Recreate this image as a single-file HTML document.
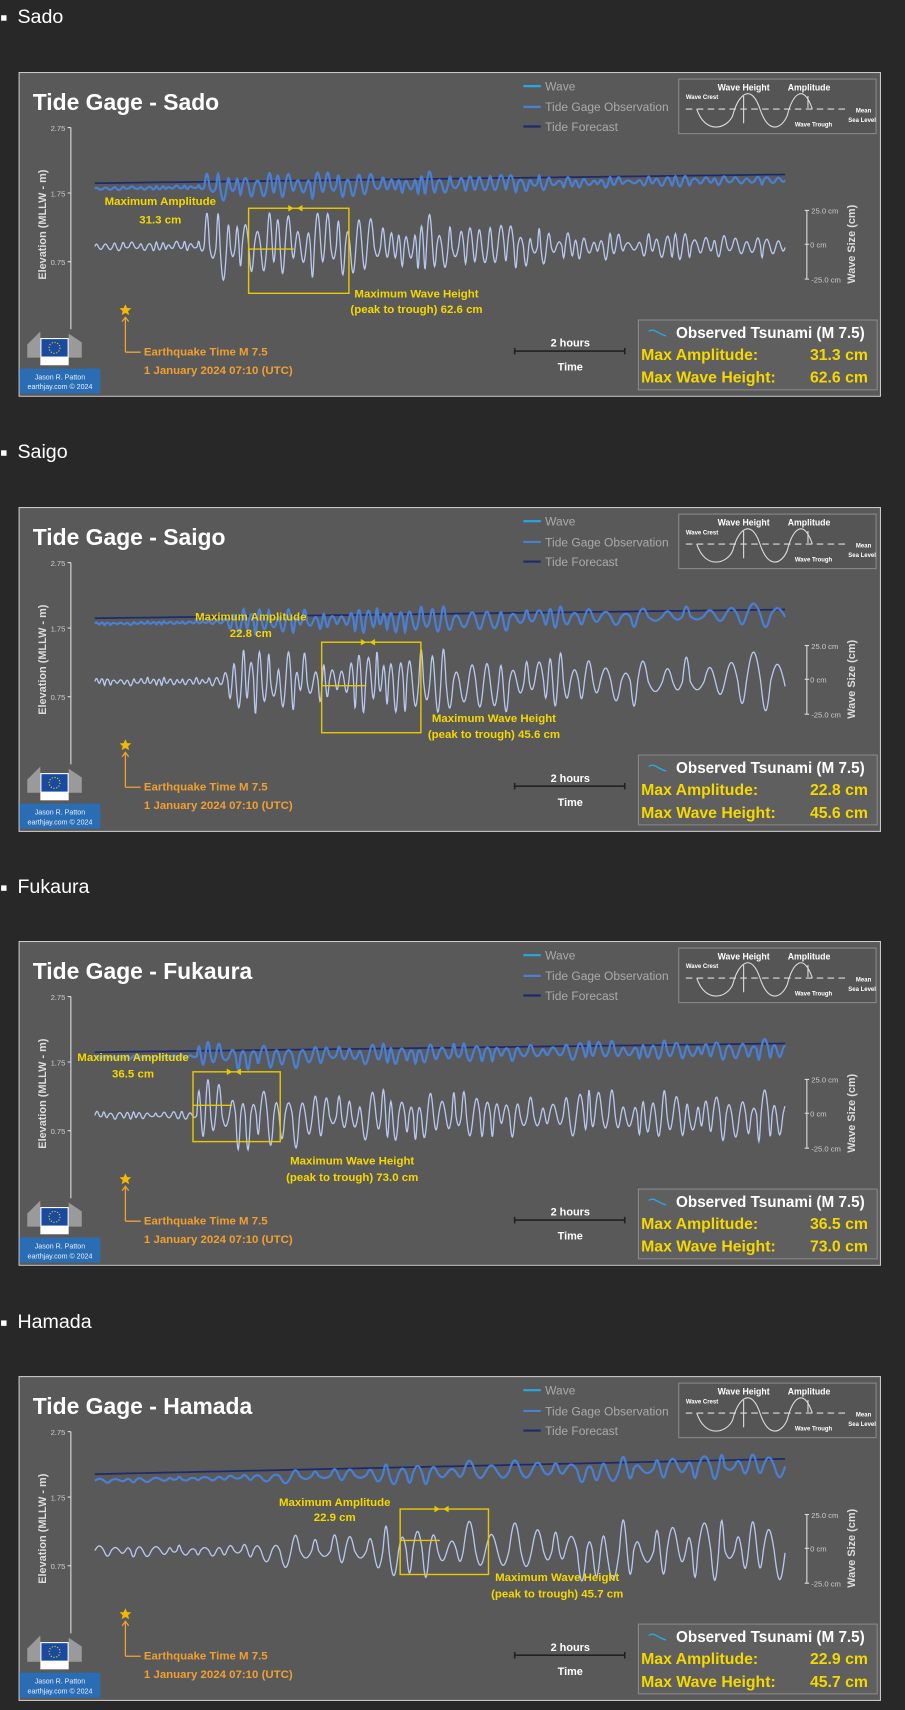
<!DOCTYPE html>
<html><head><meta charset="utf-8">
<style>
html,body{margin:0;padding:0;background:#282828;width:905px;height:1709px;overflow:hidden}
#w{position:absolute;left:0;top:0;width:830px;height:1568px;transform:scale(1.09036);transform-origin:0 0;font-family:"Liberation Sans","DejaVu Sans",sans-serif}
.h{position:absolute;left:0;color:#fff;font-size:18px}
.h:before{content:"";position:absolute;left:1px;top:9px;width:5px;height:5px;background:#fff}
.h span{position:absolute;left:16px;top:0;white-space:nowrap}
svg.c{position:absolute;left:17px}
svg text{font-family:"Liberation Sans","DejaVu Sans",sans-serif}
</style></head><body><div id="w">
<div class="h" style="top:5px"><span>Sado</span></div>
<div class="h" style="top:404px"><span>Saigo</span></div>
<div class="h" style="top:803px"><span>Fukaura</span></div>
<div class="h" style="top:1202px"><span>Hamada</span></div>
<div id="charts"></div>
</div>
<script>
var cfg=[
{top:66,name:"Sado",amp:"31.3",wh:"62.6",seed:3,
 env:function(x){return x<100?5:x<330?32:x<420?20:13},per:function(x){return x<100?7:9},
 bx:[211,303,125,203],at:[130,122,139],wt:[305,207,221],tide:0},
{top:465,name:"Saigo",amp:"22.8",wh:"45.6",seed:7,
 env:function(x){return x<115?4:x<320?30:28},per:function(x){return x<115?6:x<320?9:x<450?12:20},
 bx:[278,369,124,207],at:[213,104,119],wt:[376,197,212],tide:0},
{top:863,name:"Fukaura",amp:"36.5",wh:"73.0",seed:11,
 env:function(x){return x<90?4:x<190?36:24},per:function(x){return x<90?7:10},
 bx:[160,240,120,184],at:[105,110,125],wt:[246,205,220],tide:0},
{top:1262,name:"Hamada",amp:"22.9",wh:"45.7",seed:19,
 env:function(x){return x<150?6:x<260?16:28},per:function(x){return x<150?12:17},
 bx:[350,431,122,182],at:[290,119,133],wt:[434,188,203],tide:1}
];
function rng(s){return function(){s=(s*9301+49297)%233280;return s/233280;}}
var out="";
cfg.forEach(function(c){
 var r=rng(c.seed),wv="",ob="",fc="";
 // build half-cycles
 var x=70,sign=1,pts=[];
 var segs=[];
 while(x<705){var hp=c.per(x-70)*(0.6+r()*0.8)/2;var a=c.env(x-70)*(0.25+0.75*r());segs.push([x,hp,a,sign]);x+=hp;sign=-sign;}
 var si=0;
 for(var xx=70;xx<=703;xx+=0.5){
  while(si<segs.length-1&&xx>=segs[si][0]+segs[si][1])si++;
  var s=segs[si],u=(xx-s[0])/s[1];
  var v=s[3]*s[2]*Math.sin(Math.PI*u);
  var t=(xx-70)/633;
  var f=(c.tide?90-t*14:102-t*8);
  wv+=(xx==70?"M":"L")+xx+" "+(160-v).toFixed(1);
  fc+=(xx==70?"M":"L")+xx+" "+f.toFixed(1);
  var o=f+(c.tide?6:5)-v*0.4;
  ob+=(xx==70?"M":"L")+xx+" "+o.toFixed(1);
 }
 var b=c.bx, px=b[0]+(b[1]-b[0])*0.45;
 out+='<svg class="c" style="top:'+c.top+'px" width="791" height="298" viewBox="0 0 791 298">'+
 '<rect x="0.5" y="0.5" width="790" height="297" fill="#595959" stroke="#c8c8c8"/>'+
 '<text x="13" y="35" fill="#fff" font-size="21" font-weight="bold">Tide Gage - '+c.name+'</text>'+
 '<line x1="48" y1="51" x2="48" y2="236" stroke="#ddd"/>'+
 '<line x1="45" y1="51" x2="48" y2="51" stroke="#ddd"/><line x1="45" y1="111" x2="48" y2="111" stroke="#ddd"/><line x1="45" y1="174" x2="48" y2="174" stroke="#ddd"/>'+
 '<text x="43" y="54" fill="#ccc" font-size="7" text-anchor="end">2.75</text><text x="43" y="114" fill="#ccc" font-size="7" text-anchor="end">1.75</text><text x="43" y="177" fill="#ccc" font-size="7" text-anchor="end">0.75</text>'+
 '<text transform="translate(25,140) rotate(-90)" fill="#ddd" font-size="10" font-weight="bold" text-anchor="middle">Elevation (MLLW - m)</text>'+
 '<line x1="463" y1="13" x2="479" y2="13" stroke="#29a8e0" stroke-width="2"/><text x="483" y="17" fill="#aaa" font-size="11">Wave</text>'+
 '<line x1="463" y1="32" x2="479" y2="32" stroke="#4a7fd4" stroke-width="2"/><text x="483" y="36" fill="#aaa" font-size="11">Tide Gage Observation</text>'+
 '<line x1="463" y1="50" x2="479" y2="50" stroke="#1f2a6b" stroke-width="2"/><text x="483" y="54" fill="#aaa" font-size="11">Tide Forecast</text>'+
 '<rect x="605.5" y="6.5" width="181" height="50" fill="#555" stroke="#888"/>'+
 '<text x="665" y="17" fill="#fff" font-size="8" font-weight="bold" text-anchor="middle">Wave Height</text><text x="725" y="17" fill="#fff" font-size="8" font-weight="bold" text-anchor="middle">Amplitude</text>'+
 '<text x="612" y="25" fill="#fff" font-size="5.5" font-weight="bold">Wave Crest</text><text x="768" y="37" fill="#fff" font-size="5.5" font-weight="bold">Mean</text><text x="761" y="46" fill="#fff" font-size="5.5" font-weight="bold">Sea Level</text><text x="712" y="50" fill="#fff" font-size="5.5" font-weight="bold">Wave Trough</text>'+
 '<line x1="612" y1="34" x2="760" y2="34" stroke="#ddd" stroke-dasharray="6,4"/>'+
 '<path d="M622 34 C630 58 650 52 655 40 C660 20 672 10 680 34 C688 58 700 52 705 40 C710 20 720 10 728 34" fill="none" stroke="#ddd"/>'+
 '<line x1="665" y1="22" x2="665" y2="47" stroke="#ddd"/><line x1="724" y1="22" x2="724" y2="33" stroke="#ddd"/>'+
 '<path d="'+fc+'" fill="none" stroke="#1f2a6b" stroke-width="1.6"/>'+
 '<path d="'+ob+'" fill="none" stroke="#4a7fd4" stroke-width="2"/>'+
 '<path d="'+wv+'" fill="none" stroke="#b8c8ef" stroke-width="1.2"/>'+
 '<rect x="'+b[0]+'" y="'+b[2]+'" width="'+(b[1]-b[0])+'" height="'+(b[3]-b[2])+'" fill="none" stroke="#e8c800" stroke-width="1.3"/>'+
 '<line x1="'+b[0]+'" y1="'+(b[2]+(b[3]-b[2])*0.48)+'" x2="'+px+'" y2="'+(b[2]+(b[3]-b[2])*0.48)+'" stroke="#e8c800" stroke-width="1.3"/>'+
 '<path d="M'+(px-5)+' '+(b[2]-3)+'l5 3-5 3zM'+(px+8)+' '+(b[2]-3)+'l-5 3 5 3z" fill="#e8c800"/>'+
 '<text x="'+c.at[0]+'" y="'+c.at[1]+'" fill="#f5d800" font-size="10.5" font-weight="bold" text-anchor="middle">Maximum Amplitude</text>'+
 '<text x="'+c.at[0]+'" y="'+c.at[2]+'" fill="#f5d800" font-size="10.5" font-weight="bold" text-anchor="middle">'+c.amp+' cm</text>'+
 '<text x="'+(c.wt[0]+60)+'" y="'+c.wt[1]+'" fill="#f5d800" font-size="10.5" font-weight="bold" text-anchor="middle">Maximum Wave Height</text>'+
 '<text x="'+(c.wt[0]+60)+'" y="'+c.wt[2]+'" fill="#f5d800" font-size="10.5" font-weight="bold" text-anchor="middle">(peak to trough) '+c.wh+' cm</text>'+
 '<line x1="723" y1="127" x2="723" y2="190" stroke="#ddd"/><line x1="721" y1="127" x2="725" y2="127" stroke="#ddd"/><line x1="721" y1="158" x2="725" y2="158" stroke="#ddd"/><line x1="721" y1="190" x2="725" y2="190" stroke="#ddd"/>'+
 '<text x="727" y="130" fill="#ccc" font-size="7">25.0 cm</text><text x="726" y="161" fill="#ccc" font-size="7">0 cm</text><text x="727" y="193" fill="#ccc" font-size="7">-25.0 cm</text>'+
 '<text transform="translate(767,158) rotate(-90)" fill="#ddd" font-size="10" font-weight="bold" text-anchor="middle">Wave Size (cm)</text>'+
 '<path d="M98 213l1.6 3.5 3.8.3-2.9 2.5.9 3.7-3.4-2-3.4 2 .9-3.7-2.9-2.5 3.8-.3z" fill="#f5b800"/>'+
 '<path d="M98 257V226M95 229l3-4 3 4M98 257h14" fill="none" stroke="#f0a030" stroke-width="1.2"/>'+
 '<text x="115" y="260" fill="#f0a030" font-size="10.5" font-weight="bold">Earthquake Time M 7.5</text>'+
 '<text x="115" y="277" fill="#f0a030" font-size="10.5" font-weight="bold">1 January 2024 07:10 (UTC)</text>'+
 '<path d="M8 250 L20 238 L20 262 L8 262Z" fill="#9a9a9a"/><path d="M46 240 L58 248 L58 262 L46 262Z" fill="#9a9a9a"/>'+
 '<rect x="20" y="244" width="26" height="25" fill="#fff"/><rect x="21" y="245" width="24" height="16" fill="#1a4aa0"/>'+
 '<circle cx="33" cy="253" r="5" fill="none" stroke="#ffdd00" stroke-width="1" stroke-dasharray="1,1.6"/>'+
 '<rect x="1" y="272" width="74" height="23" fill="#2a6db5"/>'+
 '<text x="38" y="282" fill="#e8f0ff" font-size="6.5" text-anchor="middle">Jason R. Patton</text><text x="38" y="291" fill="#e8f0ff" font-size="6.5" text-anchor="middle">earthjay.com © 2024</text>'+
 '<text x="506" y="252" fill="#fff" font-size="10" font-weight="bold" text-anchor="middle">2 hours</text>'+
 '<path d="M455 253v6M455 256h101M556 253v6" stroke="#222" stroke-width="1.5" fill="none"/>'+
 '<text x="506" y="274" fill="#fff" font-size="10" font-weight="bold" text-anchor="middle">Time</text>'+
 '<rect x="568.5" y="227.5" width="219" height="64" fill="#5f5f5f" stroke="#888"/>'+
 '<path d="M578 238c5-4 9 3 16 4" fill="none" stroke="#29a8e0" stroke-width="1.3"/>'+
 '<text x="603" y="244" fill="#fff" font-size="14" font-weight="bold">Observed Tsunami (M 7.5)</text>'+
 '<text x="571" y="264" fill="#f5d800" font-size="14.5" font-weight="bold">Max Amplitude:</text><text x="779" y="264" fill="#f5d800" font-size="14.5" font-weight="bold" text-anchor="end">'+c.amp+' cm</text>'+
 '<text x="571" y="285" fill="#f5d800" font-size="14.5" font-weight="bold">Max Wave Height:</text><text x="779" y="285" fill="#f5d800" font-size="14.5" font-weight="bold" text-anchor="end">'+c.wh+' cm</text>'+
 '</svg>';
});
document.getElementById("charts").innerHTML=out;
</script>
</body></html>
